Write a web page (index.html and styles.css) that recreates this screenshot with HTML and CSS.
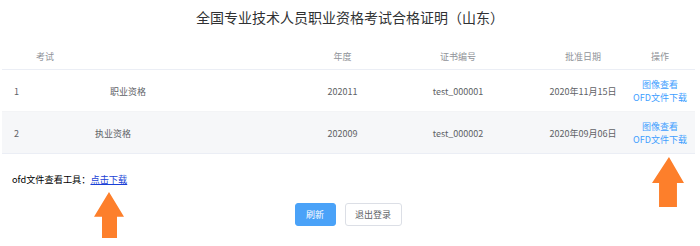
FILE: index.html
```html
<!DOCTYPE html>
<html lang="zh-CN">
<head>
<meta charset="utf-8">
<title>合格证明</title>
<link rel="stylesheet" href="styles.css">
</head>
<body>
<div class="page">
  <h1 class="title">全国专业技术人员职业资格考试合格证明（山东）</h1>
  <div class="table">
    <div class="row head">
      <div class="cell idx"></div>
      <div class="cell exam">考试</div>
      <div class="cell c">年度</div>
      <div class="cell c">证书编号</div>
      <div class="cell c">批准日期</div>
      <div class="cell c">操作</div>
      <div class="cell"></div>
    </div>
    <div class="row body r1">
      <div class="cell idx">1</div>
      <div class="cell exam"><span class="mask mask-a"></span>职业资格</div>
      <div class="cell c">202011</div>
      <div class="cell c">test_000001</div>
      <div class="cell c">2020年11月15日</div>
      <div class="cell c ops"><a>图像查看</a><a>OFD文件下载</a></div>
      <div class="cell"></div>
    </div>
    <div class="row body r2">
      <div class="cell idx">2</div>
      <div class="cell exam"><span class="mask mask-b"></span>执业资格</div>
      <div class="cell c">202009</div>
      <div class="cell c">test_000002</div>
      <div class="cell c">2020年09月06日</div>
      <div class="cell c ops"><a>图像查看</a><a>OFD文件下载</a></div>
      <div class="cell"></div>
    </div>
  </div>
  <p class="tool">ofd文件查看工具：<a class="dl" href="#">点击下载</a></p>
  <div class="actions">
    <button class="btn primary">刷新</button>
    <button class="btn plain">退出登录</button>
  </div>
  <div class="arrow arrow-a"></div>
  <div class="arrow arrow-b"></div>
</div>
</body>
</html>
```
FILE: styles.css
```css
* { box-sizing: border-box; }
html, body { margin: 0; padding: 0; background: #fff; }
body {
  font-family: "Noto Sans CJK SC", "Noto Sans", sans-serif;
  width: 700px;
  height: 246px;
  overflow: hidden;
}
.page { position: relative; width: 700px; height: 246px; }
.title {
  margin: 0;
  padding-top: 7px;
  font-size: 14px;
  line-height: 20px;
  font-weight: normal;
  color: #303133;
  text-align: center;
}
.table {
  margin: 13px 5px 0 2px;
  width: 693px;
}
.row {
  display: grid;
  grid-template-columns: 28px 255px 115px 116px 134px 20px 1fr;
  border-bottom: 1px solid #ebeef5;
  font-size: 9px;
}
.row.head { height: 30px; padding-top: 3px; color: #909399; }
.row.r1 { height: 42px; padding-top: 1px; color: #606266; background: #fff; border-bottom-color: #f3f4f6; }
.row.r2 { height: 42px; padding-top: 1px; color: #606266; background: #f6f7f9; }
.cell {
  display: flex;
  align-items: center;
  white-space: nowrap;
}
.cell.idx { padding-left: 12px; }
.cell.exam { padding-left: 6px; }
.cell.c { justify-content: center; }
.mask { display: inline-block; }
.mask-a { width: 74px; }
.mask-b { width: 59px; }
.ops {
  flex-direction: column;
  justify-content: center;
  align-items: center;
  line-height: 13.5px;
}
.ops a { color: #409eff; }
.tool {
  margin: 18px 0 0 12px;
  font-size: 9.2px;
  line-height: 14px;
  color: #000;
}
.dl { color: #1a3fd6; text-decoration: underline; }
.actions {
  margin-top: 17px;
  display: flex;
  justify-content: center;
  gap: 9px;
  padding-right: 4px;
}
.btn {
  height: 23px;
  border-radius: 3px;
  font-family: inherit;
  font-size: 9px;
  padding: 0;
  cursor: pointer;
}
.btn.primary { width: 41px; background: #4aa2f8; border: 1px solid #4aa2f8; color: #fff; }
.btn.plain { width: 57px; background: #fff; border: 1px solid #dcdfe6; color: #606266; }
.arrow {
  position: absolute;
  background: #fd7f2b;
}
.arrow-a {
  left: 94px; top: 192px; width: 30px; height: 46px;
  clip-path: polygon(50% 0, 100% 54%, 76.7% 54%, 76.7% 100%, 26.7% 100%, 26.7% 54%, 0 54%);
}
.arrow-b {
  left: 652px; top: 157px; width: 32px; height: 50px;
  clip-path: polygon(53% 0, 100% 52%, 78% 52%, 78% 100%, 22% 100%, 22% 52%, 0 52%);
}
```
